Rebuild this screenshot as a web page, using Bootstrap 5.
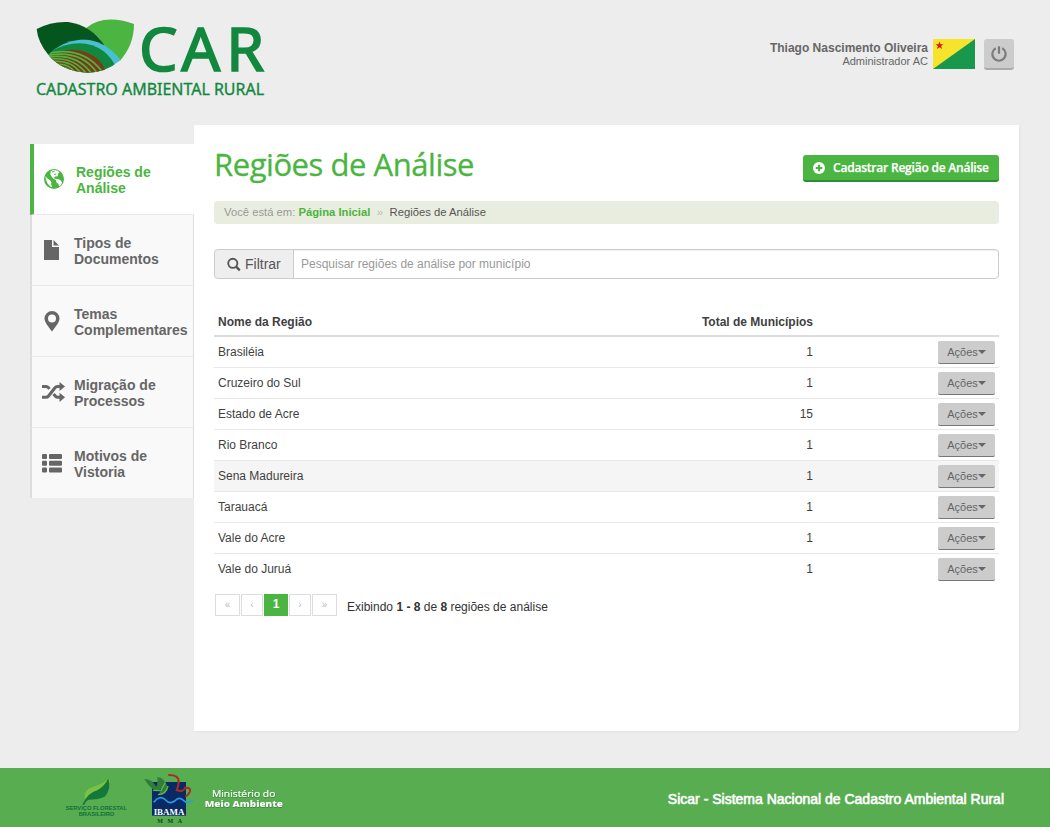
<!DOCTYPE html>
<html lang="pt-BR">
<head>
<meta charset="utf-8">
<title>CAR - Regiões de Análise</title>
<link href="https://cdn.jsdelivr.net/npm/bootstrap@5.3.0/dist/css/bootstrap.min.css" rel="stylesheet">
<style>
body{background:#ededed;font-family:"Liberation Sans",Arial,sans-serif;font-size:12px;line-height:16px;color:#444;height:827px;overflow:hidden}
.top-bar{height:125px;padding:10px 36px 0 25px}
.brand-logo{overflow:visible}
.user-area{margin-top:29px;color:#666}
.user-text{font-size:11px;line-height:13px;padding-top:3px;margin-right:5px}
.user-name{font-size:12px}
.power-btn{width:30px;height:31px;background:#ccc;border:0;border-bottom:2px solid #aaa;border-radius:3px;margin-left:9px}
.shell{padding-left:30px;height:643px}
.side-menu{width:164px;margin-top:19px}
.side-item{height:71px;background:#f9f9f9;border-left:2px solid #ddd;border-right:1px solid #ddd;border-bottom:1px solid #e9e9e9;color:#666;font-size:14px;font-weight:700;line-height:16px;padding-left:9px;text-decoration:none}
.side-item:last-child{height:70px;border-bottom:0}
.side-item svg{width:24px;height:24px;margin-right:9px;flex:none}
.side-item span{padding-top:2px}
.side-item.is-current{background:#fff;color:#4ab540;border-left:4px solid #4ab540;border-right:0;padding-left:8px;border-bottom:1px solid #e9e9e9}
.side-item.is-current svg{margin-right:10px}
.panel-main{width:825px;height:606px;background:#fff;border-radius:0 0 3px 0;padding:19px 20px 0;box-shadow:1px 1px 2px #e3e3e3}
.page-title{font-family:"Open Sans",sans-serif;font-size:31px;line-height:40px;padding-bottom:2px;color:#4ab540;font-weight:400;letter-spacing:-.45px;-webkit-text-stroke:.3px #4ab540}
.btn-add{width:196px;height:27px;margin-top:11px;background:#4ab540!important;border:0;border-bottom:2px solid #2b8c3a;border-radius:3px;color:#fff!important;font:600 12px/16px "Open Sans",sans-serif;padding:1px 0 0 10px;letter-spacing:-.21px;white-space:nowrap;-webkit-text-stroke:.25px #fff}
.trail{height:23px;background:#e9eddf;border-radius:4px;margin-top:15px;font-size:11.25px;line-height:22px;padding-left:10px;color:#999}
.trail a{color:#4ab540;font-weight:700;text-decoration:none}
.trail-sep{color:#bbb;margin:0 6.5px}
.trail-here{color:#555}
.filter-box{height:30px;margin-top:25px}
.filter-box .input-group-text{width:80px;padding:0 0 0 12px;background:#eee;border-color:#ccc;border-radius:4px 0 0 4px;font-size:14px;color:#555}
.filter-box .form-control{border-color:#ccc;border-radius:0 4px 4px 0;font-size:12px;padding:0 7px;height:30px;box-shadow:inset 0 1px 1px rgba(0,0,0,.06)}
.filter-box .form-control::placeholder{color:#999}
.grid-table{margin:28px 0 0;table-layout:fixed;font-size:12px;line-height:16px;--bs-table-bg:transparent}
.grid-table>:not(caption)>*>*{padding:7px 4px 3px;border-bottom:1px solid #e8e8e8;color:#3f3f3f;height:31px;vertical-align:top}
.grid-table>thead>tr>th{border-bottom:2px solid #ddd;height:29px}
.grid-table>tbody>tr>td:last-child{padding-top:4px}
.grid-table>tbody>tr:last-child>td{border-bottom:0}
.grid-table tr.is-hover>td{background:#f5f5f5}
.btn-act{display:block;margin-left:auto;width:57px;height:23px;background:#ccc!important;border:0;border-bottom:1px solid #777;border-radius:2px;font-size:11px;line-height:20px;padding:0;color:#666!important}
.btn-act.dropdown-toggle::after{margin-left:0;border-top:4px solid;border-right:4px solid transparent;border-left:4px solid transparent;vertical-align:2px}
.pager{margin:9px 0 0 1px}
.pager .page-link{width:22px;height:22px;padding:0;border:1px solid #ddd;border-radius:0!important;margin:0 1px 0 0!important;font-size:10px;line-height:19px;color:#bbb;text-align:center;background:#fff}
.pager .page-item:first-child .page-link,.pager .page-item:last-child .page-link{width:25px}
.pager .page-item.active .page-link{width:24px;background:#4ab540;border-color:#4ab540;color:#fff;font-size:12px;font-weight:700}
.pager-info{line-height:16px;margin:5px 0 0 9px;color:#333}
.foot{height:59px;background:#57ad50;color:#fff;padding:0 46px 0 55px}
.foot-name{font-size:14px;line-height:16px;margin-top:23px;-webkit-text-stroke:.6px #fff}
</style>
</head>
<body>
<header class="top-bar d-flex justify-content-between align-items-start">
<svg class="brand-logo" width="250" height="95" viewBox="0 0 750 285" role="img">
<clipPath id="bowl"><path d="M70 134Q108 94 165 89Q235 86 287 150Q240 189 185 188Q110 183 70 134Z"/></clipPath>
<path d="M182 55Q235 10 327 42Q327 105 285 152L236 105Q220 75 182 55Z" fill="#4ab540"/>
<path d="M35 57Q80 33 130 36Q200 47 238 106L165 160L70 134Q39 98 35 57Z" fill="#05551f"/>
<g clip-path="url(#bowl)"><rect x="60" y="80" width="240" height="115" fill="#48bfd2"/>
<path d="M62 132Q165 72 236 124Q258 142 270 166L250 200H80Z" fill="#12883f"/>
<path d="M60 143Q140 98 205 138Q232 154 244 188H90Z" fill="#7b3b16"/>
<g fill="none" stroke="#4ab540" stroke-width="5"><path d="M68 130Q172 107 231 184"/><path d="M70 136Q168 118 217 190"/><path d="M72 141Q158 130 201 193"/><path d="M78 147Q146 140 185 192"/><path d="M86 154Q140 151 168 190"/><path d="M96 163Q133 160 152 190"/><path d="M108 172Q130 171 138 188"/></g></g>
<g fill="#12883f" font-family="'Noto Sans','Open Sans',sans-serif"><text x="342 469 604" y="184" font-size="183" stroke="#12883f" stroke-width="5">CAR</text><text x="33" y="254" font-size="46" stroke="#12883f" stroke-width="1" textLength="684" lengthAdjust="spacingAndGlyphs">CADASTRO AMBIENTAL RURAL</text></g>
</svg>
<div class="user-area d-flex">
<div class="user-text text-end"><div class="user-name fw-bold">Thiago Nascimento Oliveira</div><div>Administrador AC</div></div>
<svg width="42" height="30" viewBox="0 0 42 30"><path fill="#f6e32c" d="M0 0h42v30H0z"/><path fill="#17984c" d="M42 0v30H0z"/><path fill="#d41a1f" d="M6.500 2.500l1 2.800h3L8.100 7.100 9 10 6.500 8.300 4 10l.9-2.900L2.500 5.300h3z"/></svg>
<button class="power-btn btn d-flex align-items-center justify-content-center p-0" type="button" aria-label="Sair"><svg width="18" height="18" viewBox="0 0 18 18" fill="none" stroke="#7b7b7b" stroke-width="2.200"><path d="M5.700 3.200a6.700 6.700 0 1 0 6.600 0M9 1.200v7.600"/></svg></button>
</div>
</header>
<div class="shell d-flex">
<nav class="side-menu d-flex flex-column">
<a class="side-item is-current d-flex align-items-center" href="#"><svg viewBox="0 0 24 24"><circle cx="12" cy="12" r="10" fill="currentColor"/><path fill="#fff" d="M8.500 4.200l3-1.200 4.500.8 1.300 1.700-1.300 1.500-.3 2.200-2.500.4-1.600 1.500 1.500.6 2.900.3 2.800 1.400 1.300 2.200-1.200 2.700-1.600 1.200-1-2.700-1.900-1.300-.2-2.300-2.900-1.700-1.400-1.600-1.600-2.600.3-1.900z"/><path fill="#fff" d="M3.500 9l1.600 2.200 2.600 1.700 1.700 2.300-.3 2.200 1.200 2.800-2.200-.8-2.700-3.200-1.500-3.700z"/><path d="M10 5l2.500-.5M12 7.500l2-.5" stroke="currentColor" stroke-width="1"/></svg><span>Regiões de<br>Análise</span></a>
<a class="side-item d-flex align-items-center" href="#"><svg viewBox="0 0 24 24" fill="currentColor"><path d="M3 2h8v7h7v13H3zM12.500 2L18 7.500h-5.500z"/></svg><span>Tipos de<br>Documentos</span></a>
<a class="side-item d-flex align-items-center" href="#"><svg viewBox="0 0 24 24" fill="currentColor"><path fill-rule="evenodd" d="M11 2a7.500 7.500 0 0 1 7.500 7.500c0 3.700-4.500 9-7.500 13-3-4-7.500-9.300-7.500-13A7.500 7.500 0 0 1 11 2zm0 3.500a4 4 0 1 0 0 8 4 4 0 0 0 0-8z"/></svg><span>Temas<br>Complementares</span></a>
<a class="side-item d-flex align-items-center" href="#"><svg viewBox="0 0 24 24" fill="none" stroke="currentColor" stroke-width="3"><path d="M1 6.500h4q1.500 0 2.500 1.200l1 1.200M12.500 14l2 2.300q.9 1 2.500 1h2M1 17.300h4q1.500 0 2.500-1.300L14 7.800Q15 6.500 16.500 6.500H19"/><path fill="currentColor" stroke="none" d="M18.500 1.900L24 6.500l-5.500 4.600zM18.500 12.700L24 17.300l-5.500 4.600z"/></svg><span>Migração de<br>Processos</span></a>
<a class="side-item d-flex align-items-center" href="#"><svg viewBox="0 0 24 24" fill="currentColor"><rect x="1" y="3" width="5" height="5" rx="1"/><rect x="8" y="3" width="13" height="5" rx="1"/><rect x="1" y="9.700" width="5" height="5" rx="1"/><rect x="8" y="9.700" width="13" height="5" rx="1"/><rect x="1" y="16.400" width="5" height="5" rx="1"/><rect x="8" y="16.400" width="13" height="5" rx="1"/></svg><span>Motivos de<br>Vistoria</span></a>
</nav>
<main class="panel-main">
<div class="d-flex justify-content-between align-items-start">
<h1 class="page-title mt-0 mb-0">Regiões de Análise</h1>
<button class="btn btn-add d-flex align-items-center" type="button"><svg class="me-2" width="12" height="12" viewBox="0 0 12 12"><circle cx="6" cy="6" r="6" fill="#fff"/><path d="M6 2.700v6.600M2.700 6h6.600" stroke="#4ab540" stroke-width="2.200"/></svg><span>Cadastrar Região de Análise</span></button>
</div>
<div class="trail">Você está em: <a href="#">Página Inicial</a><span class="trail-sep">»</span><span class="trail-here">Regiões de Análise</span></div>
<div class="filter-box input-group"><span class="input-group-text"><svg class="me-1" width="14" height="15" viewBox="0 0 15 15" fill="none" stroke="#555" stroke-width="2"><circle cx="6.200" cy="6.200" r="4.900"/><path d="M9.700 9.700l4 4" stroke-width="2.600"/></svg>Filtrar</span><input class="form-control" type="text" placeholder="Pesquisar regiões de análise por município"></div>
<table class="table grid-table">
<colgroup><col style="width:403px"><col style="width:200px"><col></colgroup>
<thead><tr><th>Nome da Região</th><th class="text-end">Total de Municípios</th><th></th></tr></thead>
<tbody>
<tr><td>Brasiléia</td><td class="text-end">1</td><td><button class="btn btn-act dropdown-toggle" type="button">Ações</button></td></tr>
<tr><td>Cruzeiro do Sul</td><td class="text-end">1</td><td><button class="btn btn-act dropdown-toggle" type="button">Ações</button></td></tr>
<tr><td>Estado de Acre</td><td class="text-end">15</td><td><button class="btn btn-act dropdown-toggle" type="button">Ações</button></td></tr>
<tr><td>Rio Branco</td><td class="text-end">1</td><td><button class="btn btn-act dropdown-toggle" type="button">Ações</button></td></tr>
<tr class="is-hover"><td>Sena Madureira</td><td class="text-end">1</td><td><button class="btn btn-act dropdown-toggle" type="button">Ações</button></td></tr>
<tr><td>Tarauacá</td><td class="text-end">1</td><td><button class="btn btn-act dropdown-toggle" type="button">Ações</button></td></tr>
<tr><td>Vale do Acre</td><td class="text-end">1</td><td><button class="btn btn-act dropdown-toggle" type="button">Ações</button></td></tr>
<tr><td>Vale do Juruá</td><td class="text-end">1</td><td><button class="btn btn-act dropdown-toggle" type="button">Ações</button></td></tr>
</tbody>
</table>
<div class="pager d-flex align-items-start">
<ul class="pagination m-0"><li class="page-item"><a class="page-link" href="#">«</a></li><li class="page-item"><a class="page-link" href="#">‹</a></li><li class="page-item active"><a class="page-link" href="#">1</a></li><li class="page-item"><a class="page-link" href="#">›</a></li><li class="page-item"><a class="page-link" href="#">»</a></li></ul>
<div class="pager-info">Exibindo <b>1 - 8</b> de <b>8</b> regiões de análise</div>
</div>
</main>
</div>
<footer class="foot d-flex justify-content-between align-items-start">
<svg width="240" height="59" viewBox="0 24 720 177">
<path d="M92 122Q80 90 116 80Q140 74 163 55Q166 66 164 78Q130 82 92 122Z" fill="#7cc13f"/>
<path d="M82 134Q98 98 128 90Q150 78 160 55Q170 88 149 110Q130 119 100 119Q92 124 88 134Z" fill="#12793a"/>
<g fill="#12703a" font-family="'Liberation Sans',sans-serif" font-weight="700" font-size="16"><text x="32" y="149" textLength="184" lengthAdjust="spacingAndGlyphs">SERVIÇO FLORESTAL</text><text x="71" y="167" textLength="107" lengthAdjust="spacingAndGlyphs">BRASILEIRO</text></g>
<rect x="291" y="66" width="102" height="101" fill="#0a2a66"/>
<path d="M268 57Q292 58 304 80Q310 62 306 51Q328 52 337 80Q340 98 309 105Q316 94 325 84L304 94Q283 83 268 57Z" fill="#2f7f3a"/><path d="M294 91L318 92L331 67M309 104Q334 103 339 78" stroke="#61b24a" stroke-width="4" fill="none"/>
<path d="M340 45Q372 44 371 66Q371 78 365 90Q386 98 390 83Q408 82 405 94Q401 105 391 110" stroke="#b02a25" stroke-width="6" fill="none"/>
<path d="M296 127Q315 103 332 120Q344 134 359 123Q374 108 386 122Q398 134 414 119" stroke="#2d9be0" stroke-width="5" fill="none"/>
<text x="296" y="166" font-family="'Liberation Serif',serif" font-weight="700" font-size="25" fill="#fff" textLength="92" lengthAdjust="spacingAndGlyphs">IBAMA</text>
<text x="307" y="188" font-family="'Liberation Serif',serif" font-weight="700" font-size="18" fill="#173c24" textLength="74">MMA</text>
<g fill="#fff" font-family="'Open Sans',sans-serif" style="filter:drop-shadow(1px 2px 2px #347a35)"><text x="471" y="110" font-size="28" stroke="#fff" stroke-width=".6" textLength="190" lengthAdjust="spacingAndGlyphs">Ministério do</text><text x="449" y="142" font-size="28" font-weight="800" textLength="235" lengthAdjust="spacingAndGlyphs">Meio Ambiente</text></g>
</svg>
<div class="foot-name">Sicar - Sistema Nacional de Cadastro Ambiental Rural</div>
</footer>
<script src="https://cdn.jsdelivr.net/npm/bootstrap@5.3.0/dist/js/bootstrap.bundle.min.js"></script>
</body>
</html>
